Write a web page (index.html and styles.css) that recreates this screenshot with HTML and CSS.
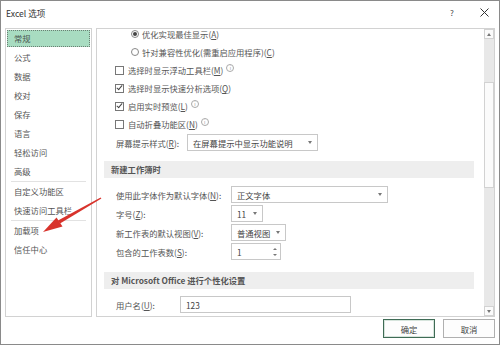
FILE: index.html
```html
<!DOCTYPE html>
<html lang="zh-CN">

<head>
    <meta charset="utf-8">
    <link rel="stylesheet" href="styles.css">
</head>

<body>
    <div class="dialog">
        <div class="title-bar">
            <span class="title">Excel 选项</span>
            <span class="help">?</span>
            <span class="close">
                <svg width="9" height="9" viewBox="0 0 9 9"><path d="M0.5 0.5 L8.5 8.5 M8.5 0.5 L0.5 8.5" stroke="#333" stroke-width="1" /></svg>
            </span>
        </div>

        <div class="dialog-body">
            <ul class="nav">
                <li class="nav-item selected">常规</li>
                <li class="nav-item">公式</li>
                <li class="nav-item">数据</li>
                <li class="nav-item">校对</li>
                <li class="nav-item">保存</li>
                <li class="nav-item">语言</li>
                <li class="nav-item">轻松访问</li>
                <li class="nav-item">高级</li>
                <li class="nav-sep"></li>
                <li class="nav-item">自定义功能区</li>
                <li class="nav-item">快速访问工具栏</li>
                <li class="nav-sep"></li>
                <li class="nav-item">加载项</li>
                <li class="nav-item">信任中心</li>
            </ul>

            <div class="pane">
                <div class="pane-content">
                    <div class="opt indent"><span class="radio on"></span>优化实现最佳显示(<u>A</u>)</div>
                    <div class="opt indent"><span class="radio"></span>针对兼容性优化(需重启应用程序)(<u>C</u>)</div>
                    <div class="opt"><span class="check"></span>选择时显示浮动工具栏(<u>M</u>)<span class="info">i</span></div>
                    <div class="opt"><span class="check on"></span>选择时显示快速分析选项(<u>Q</u>)</div>
                    <div class="opt"><span class="check on"></span>启用实时预览(<u>L</u>)<span class="info">i</span></div>
                    <div class="opt"><span class="check"></span>自动折叠功能区(<u>N</u>)<span class="info">i</span></div>
                    <div class="field-row">
                        <span class="label tip-label">屏幕提示样式(<u>R</u>):</span>
                        <span class="select tip-select">在屏幕提示中显示功能说明<span class="caret"></span></span>
                    </div>

                    <div class="section">新建工作簿时</div>
                    <div class="field-grid">
                        <span class="label">使用此字体作为默认字体(<u>N</u>):</span>
                        <span class="select font-select">正文字体<span class="caret"></span></span>
                        <span class="label">字号(<u>Z</u>):</span>
                        <span class="select size-select">11<span class="caret"></span></span>
                        <span class="label">新工作表的默认视图(<u>V</u>):</span>
                        <span class="select view-select">普通视图<span class="caret"></span></span>
                        <span class="label">包含的工作表数(<u>S</u>):</span>
                        <span class="select sheet-spin">1<span class="spin"><span class="up"></span><span class="down"></span></span></span>
                    </div>

                    <div class="section section-office">对 Microsoft Office 进行个性化设置</div>
                    <div class="field-row user-row">
                        <span class="label user-label">用户名(<u>U</u>):</span>
                        <span class="select user-input">123</span>
                    </div>
                </div>

                <div class="scrollbar">
                    <div class="sb-btn"><span class="sb-up"></span></div>
                    <div class="sb-track"><div class="sb-thumb"></div></div>
                    <div class="sb-btn"><span class="sb-down"></span></div>
                </div>
            </div>
        </div>

        <div class="footer">
            <button class="btn btn-default">确定</button>
            <button class="btn">取消</button>
        </div>

        <svg class="pointer-arrow" width="500" height="345" viewBox="0 0 500 345">
            <polygon points="101.4,198.6 100.6,197.4 58.0,220.6 60.0,223.6" fill="#d8332c" />
            <polygon points="43,232 56.5,217.5 62.5,226.5" fill="#d8332c" />
        </svg>
    </div>
</body>

</html>
```

FILE: styles.css
```css
body {
    margin: 0;
    padding: 0;
    font-family: "Noto Sans CJK SC", "Noto Sans", sans-serif;
    font-size: 8.3px;
    color: #555;
    background-color: #fff;
}

u {
    text-underline-offset: 1px;
}

.dialog {
    position: relative;
    width: 500px;
    height: 345px;
    box-sizing: border-box;
    border: 1px solid #8a8a8a;
    background-color: #fff;
    display: flex;
    flex-direction: column;
}

/* title */

.title-bar {
    height: 27px;
    display: flex;
    align-items: flex-start;
    padding: 5px 0 0 5px;
    box-sizing: border-box;
}

.title {
    font-size: 8.6px;
    line-height: 14px;
    color: #333;
}

.help {
    margin-left: auto;
    width: 6px;
    font-size: 8px;
    line-height: 14px;
    color: #444;
}

.close {
    margin: 2px 10px 0 24px;
    width: 9px;
    height: 9px;
    display: flex;
}

/* body */

.dialog-body {
    height: 289px;
    display: flex;
    gap: 4px;
    padding: 0 4px 0 4px;
}

.nav {
    list-style: none;
    margin: 0;
    padding: 0 1px;
    width: 87px;
    box-sizing: border-box;
    border: 1px solid #d2d2d2;
    display: flex;
    flex-direction: column;
}

.nav-item {
    height: 17px;
    margin: 1px 0;
    padding-left: 7px;
    line-height: 17px;
    color: #555;
}

.nav-item.selected {
    background-color: #a8dcc1;
    outline: 1px dotted #6b7f73;
    outline-offset: -1px;
    color: #4d5a52;
}

.nav-sep {
    height: 1px;
    margin: 0 4px;
    background-color: #e2e2e2;
}

.pane {
    flex: 1;
    border: 1px solid #d2d2d2;
    display: flex;
    overflow: hidden;
}

.pane-content {
    flex: 1;
    margin-top: -4px;
}

.opt {
    height: 18px;
    display: flex;
    align-items: center;
    padding-left: 18px;
    white-space: nowrap;
}

.opt.indent {
    padding-left: 34px;
}

.radio {
    width: 8px;
    height: 8px;
    box-sizing: border-box;
    border: 1px solid #888;
    border-radius: 50%;
    margin-right: 3px;
    display: flex;
    align-items: center;
    justify-content: center;
}

.radio.on::after {
    content: "";
    width: 4px;
    height: 4px;
    border-radius: 50%;
    background-color: #444;
}

.check {
    width: 9px;
    height: 9px;
    box-sizing: border-box;
    border: 1px solid #777;
    background-color: #fff;
    margin-right: 4px;
    display: flex;
    align-items: center;
    justify-content: center;
}

.check.on::after {
    content: "";
    width: 2px;
    height: 5px;
    margin-top: -2px;
    border-right: 1px solid #444;
    border-bottom: 1px solid #444;
    transform: rotate(40deg);
}

.info {
    width: 6px;
    height: 6px;
    margin: -5px 0 0 3px;
    border: 1px solid #aaa;
    border-radius: 50%;
    font-size: 5px;
    line-height: 6px;
    text-align: center;
    color: #999;
}

.field-row {
    height: 19px;
    display: flex;
    align-items: center;
    padding-left: 19px;
}

.label {
    white-space: nowrap;
}

.tip-label {
    width: 71px;
}

.user-label {
    width: 64px;
}

.select {
    height: 17px;
    box-sizing: border-box;
    border: 1px solid #c8c8c8;
    padding: 0 5px 0 5px;
    display: flex;
    align-items: center;
    justify-content: space-between;
    color: #444;
    white-space: nowrap;
}

.caret {
    width: 0;
    height: 0;
    border-left: 2.5px solid transparent;
    border-right: 2.5px solid transparent;
    border-top: 3px solid #777;
}

.tip-select {
    width: 131px;
}

.section {
    height: 17px;
    margin: 9px 10px 0 7px;
    padding-left: 7px;
    line-height: 17px;
    background-color: #eeeeee;
    font-weight: bold;
    color: #555;
}

.field-grid {
    margin-top: 7px;
    display: grid;
    grid-template-columns: 115px auto;
    grid-auto-rows: 19px;
    align-items: center;
    justify-items: start;
    padding-left: 19px;
}

.font-select {
    width: 157px;
}

.size-select {
    width: 32px;
}

.view-select {
    width: 55px;
}

.sheet-spin {
    width: 50px;
    padding-right: 3px;
}

.spin {
    display: flex;
    flex-direction: column;
    gap: 4px;
}

.spin .up,
.spin .down {
    width: 0;
    height: 0;
    border-left: 2px solid transparent;
    border-right: 2px solid transparent;
}

.spin .up {
    border-bottom: 2px solid #777;
}

.spin .down {
    border-top: 2px solid #777;
}

.section-office {
    margin-top: 11px;
}

.user-row {
    margin-top: 6px;
}

.user-input {
    width: 171px;
}

/* scrollbar */

.scrollbar {
    width: 10px;
    display: flex;
    flex-direction: column;
    background-color: #e8e8e8;
}

.sb-btn {
    height: 10px;
    box-sizing: border-box;
    border: 1px solid #d2d2d2;
    background-color: #fbfbfb;
    display: flex;
    align-items: center;
    justify-content: center;
}

.sb-up,
.sb-down {
    width: 0;
    height: 0;
    border-left: 2.5px solid transparent;
    border-right: 2.5px solid transparent;
}

.sb-up {
    border-bottom: 3px solid #777;
}

.sb-down {
    border-top: 3px solid #777;
}

.sb-track {
    flex: 1;
}

.sb-thumb {
    margin-top: 43px;
    height: 106px;
    box-sizing: border-box;
    border: 1px solid #d2d2d2;
    background-color: #fbfbfb;
}

/* buttons */

.footer {
    display: flex;
    justify-content: flex-end;
    gap: 8px;
    padding: 2px 4px 0 0;
}

.btn {
    width: 52px;
    height: 19px;
    padding: 0;
    border: 1px solid #b0b0b0;
    background-color: #fdfdfd;
    font-family: "Noto Sans CJK SC", "Noto Sans", sans-serif;
    font-size: 8.3px;
    color: #444;
}

.btn-default {
    border-color: #3f6b55;
    box-shadow: inset 0 0 0 1px #d6e4dc;
}

.pointer-arrow {
    position: absolute;
    left: -1px;
    top: -1px;
    pointer-events: none;
}
```
